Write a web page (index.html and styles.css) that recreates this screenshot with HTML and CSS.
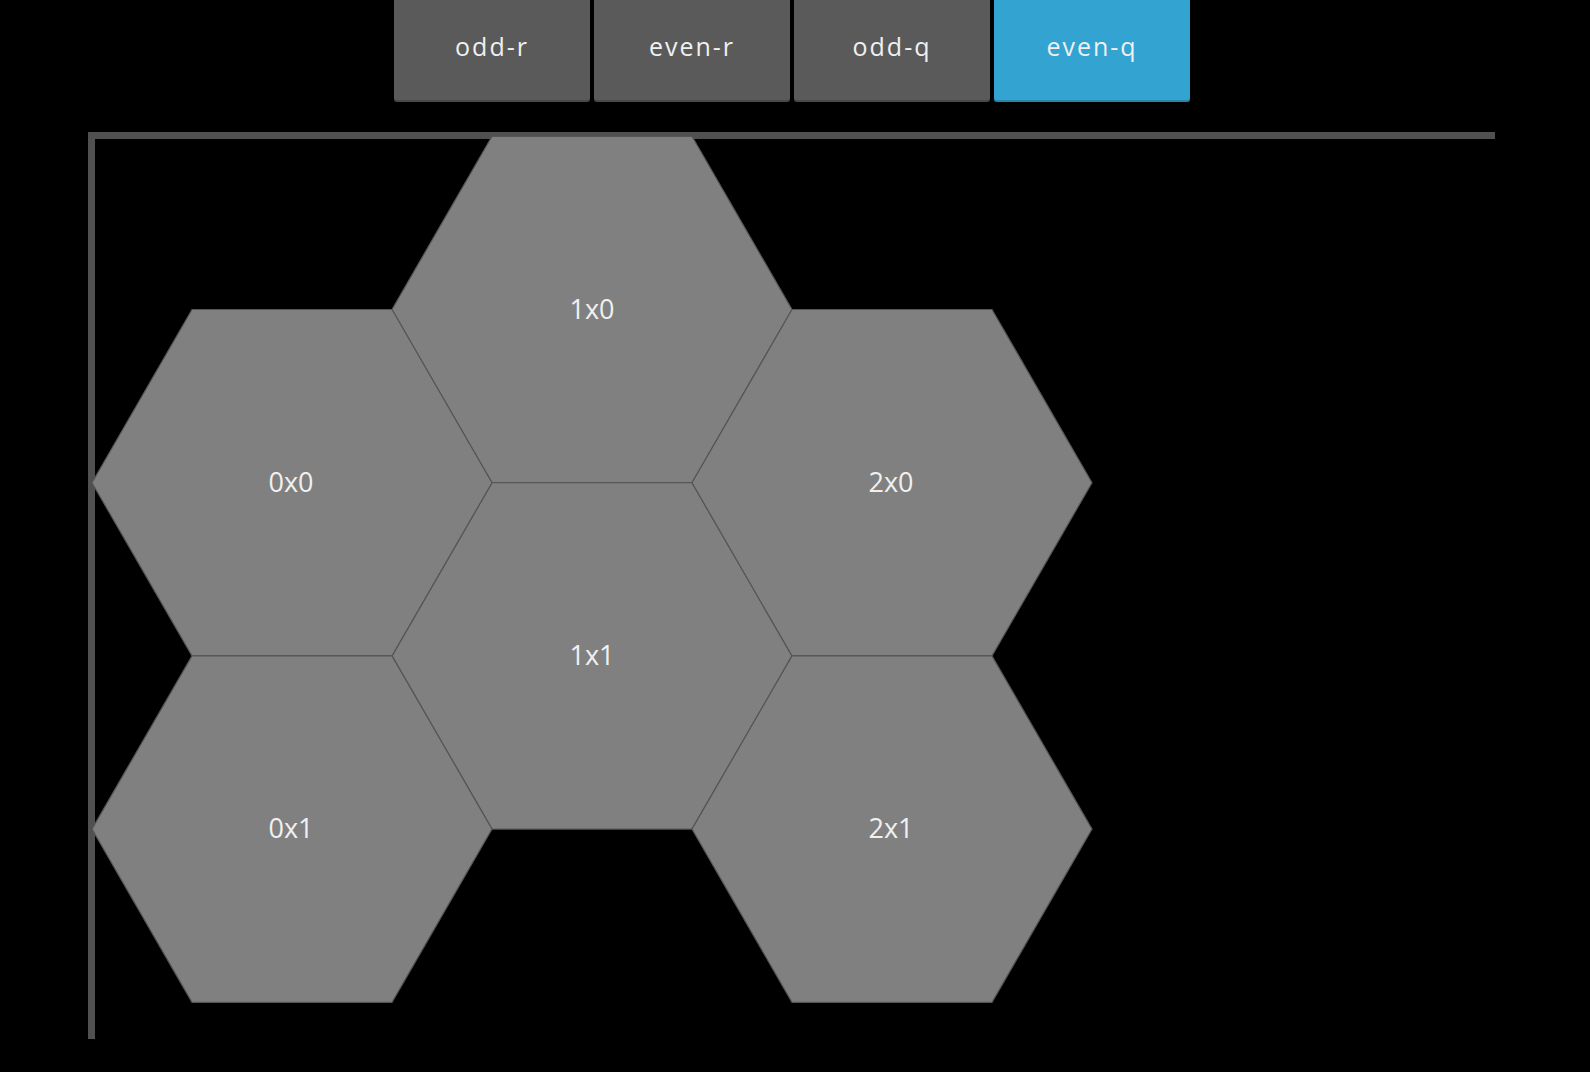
FILE: index.html
```html
<!DOCTYPE html>
<html lang="en">
<head>
    <meta charset="UTF-8">
    <meta name="viewport" content="width=device-width, initial-scale=1.0">
    <title>Hex Grid Offsets</title>
    <link rel="stylesheet" href="styles.css">
</head>
<body>
    <div class="toolbar">
        <button class="mode-btn">odd-r</button>
        <button class="mode-btn">even-r</button>
        <button class="mode-btn">odd-q</button>
        <button class="mode-btn active">even-q</button>
    </div>

    <svg class="board" width="1590" height="970" viewBox="0 102 1590 970">
        <!-- axes -->
        <line class="axis" x1="88" y1="135.5" x2="1495" y2="135.5"></line>
        <line class="axis" x1="91.5" y1="132" x2="91.5" y2="1039"></line>

        <g class="hex">
            <polygon points="392,309.5 492,136.3 692,136.3 792,309.5 692,482.7 492,482.7"></polygon>
            <text x="592" y="318.5">1x0</text>
        </g>
        <g class="hex">
            <polygon points="392,655.9 492,482.7 692,482.7 792,655.9 692,829.1 492,829.1"></polygon>
            <text x="592" y="664.9">1x1</text>
        </g>
        <g class="hex">
            <polygon points="92,482.7 192,309.5 392,309.5 492,482.7 392,655.9 192,655.9"></polygon>
            <text x="291" y="491.7">0x0</text>
        </g>
        <g class="hex">
            <polygon points="92,829.1 192,655.9 392,655.9 492,829.1 392,1002.3 192,1002.3"></polygon>
            <text x="291" y="838.1">0x1</text>
        </g>
        <g class="hex">
            <polygon points="692,482.7 792,309.5 992,309.5 1092,482.7 992,655.9 792,655.9"></polygon>
            <text x="891" y="491.7">2x0</text>
        </g>
        <g class="hex">
            <polygon points="692,829.1 792,655.9 992,655.9 1092,829.1 992,1002.3 792,1002.3"></polygon>
            <text x="891" y="838.1">2x1</text>
        </g>
    </svg>
</body>
</html>
```

FILE: styles.css
```css
body { margin: 0; background: #000; font-family: "Open Sans", "DejaVu Sans", sans-serif; overflow: hidden; }
.toolbar { display: flex; justify-content: center; padding-right: 2px; height: 102px; }
.mode-btn { width: 196px; height: 102px; margin-right: 4px; border: none; border-radius: 0 0 3px 3px; background: #5a5a5a; color: #f0f0f0; font-family: "Open Sans", "DejaVu Sans", sans-serif; font-size: 25px; letter-spacing: 2px; padding: 0 0 10px; box-shadow: inset 0 -2px 0 rgba(0,0,0,0.18); }
.mode-btn.active { background: #33a4d1; }
.board { display: block; }
.axis { stroke: #505050; stroke-width: 7; }
.hex polygon { fill: #808080; stroke: #565656; stroke-width: 1.2; }
.hex text { fill: #f0f0f0; font-family: "Open Sans", "DejaVu Sans", sans-serif; font-size: 27px; text-anchor: middle; }
```
